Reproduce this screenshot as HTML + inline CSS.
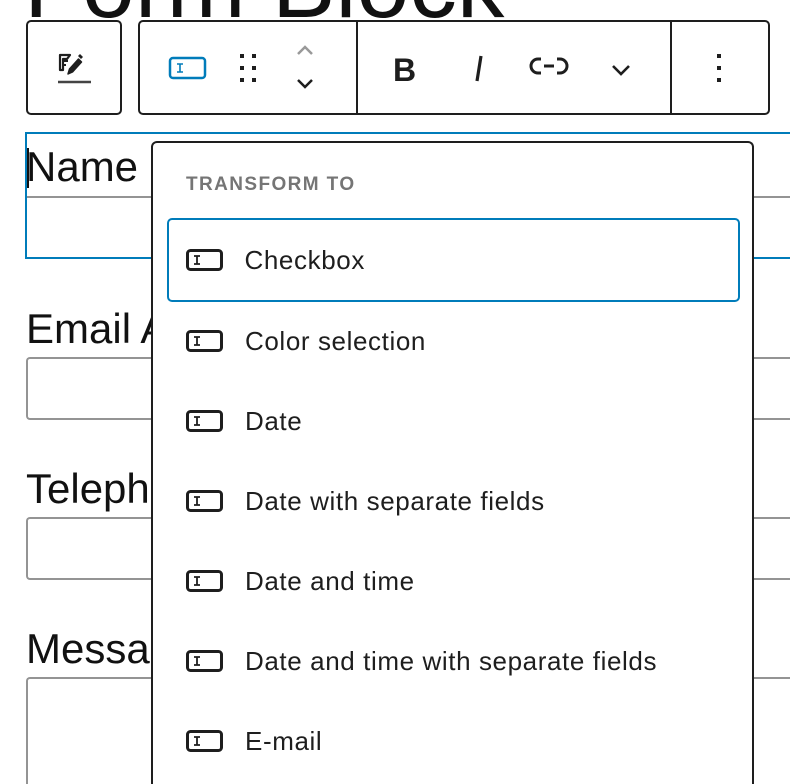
<!DOCTYPE html>
<html style="width:790px;height:784px;overflow:hidden"><head><meta charset="utf-8"><style>
*{margin:0;padding:0;box-sizing:border-box}
body{width:790px;height:784px;overflow:hidden;background:#fff;position:relative;font-family:"Liberation Sans",sans-serif;color:#1e1e1e}
.a{position:absolute}
.title{left:24px;top:-60px;font-size:95px;line-height:90px;color:#111;white-space:nowrap}
.lbl{left:26px;font-size:42px;line-height:42px;color:#111;white-space:nowrap}
.inp{left:26px;width:764px;border:2px solid #949494;border-right:none;border-radius:4px 0 0 4px}
.tb{border:2px solid #1e1e1e;border-radius:5px;background:#fff}
.pop{left:151px;top:141px;width:603px;height:643px;border:2px solid #1e1e1e;border-bottom:none;border-radius:6px 6px 0 0;background:#fff}
.hd{left:33px;top:31px;font-size:19px;font-weight:bold;color:#757575;letter-spacing:1.4px}
.item{left:14px;width:573px;height:80px;display:flex;align-items:center;font-size:26px;letter-spacing:.6px;color:#1e1e1e}
.item svg{margin-left:19px;margin-right:22px}
.sel{border:2.5px solid #007cba;border-radius:5px}
.sel svg{margin-left:16.5px}
</style></head><body>
<div class="a title">Form Block</div>

<div class="a lbl" style="top:146px">Name</div>
<div class="a" style="left:26px;top:196px;width:764px;height:2px;background:#949494"></div>
<div class="a" style="left:25px;top:132px;width:765px;height:127px;border:2.5px solid #007cba;border-right:none"></div>
<div class="a" style="left:27px;top:148px;width:2px;height:40px;background:#111"></div>

<div class="a lbl" style="top:308px">Email Address</div>
<div class="a inp" style="top:357px;height:63px"></div>
<div class="a lbl" style="top:468px">Telephone</div>
<div class="a inp" style="top:517px;height:63px"></div>
<div class="a lbl" style="top:628px">Message</div>
<div class="a inp" style="top:677px;height:107px;border-bottom:none;border-radius:4px 0 0 0"></div>

<!-- toolbar -->
<div class="a tb" style="left:26px;top:20px;width:96px;height:95px"></div>
<div class="a tb" style="left:138px;top:20px;width:632px;height:95px"></div>
<div class="a" style="left:356px;top:21px;width:2px;height:93px;background:#1e1e1e"></div>
<div class="a" style="left:670px;top:21px;width:2px;height:93px;background:#1e1e1e"></div>
<svg class="a" style="left:0;top:0" width="790" height="120" fill="none">
<path d="M60 70V55h10l-3 4h-4v11z" stroke="#1e1e1e" stroke-width="2.2" stroke-linejoin="round"/>
<path d="M63 61h5M63 65h3" stroke="#1e1e1e" stroke-width="2"/>
<path d="M68 74l1.5-5 9-10 3 3-9 10z" fill="#1e1e1e" stroke="#1e1e1e" stroke-width="1.5" stroke-linejoin="round"/>
<path d="M78 56l2-2 3 3-2 2z" fill="#1e1e1e"/>
<path d="M58 82h33" stroke="#444" stroke-width="2.6"/>
<rect x="170" y="58" width="35" height="20" rx="3" stroke="#007cba" stroke-width="2.5"/>
<path d="M177 64h6M180 64v8M177 72h6" stroke="#007cba" stroke-width="1.6"/>
<g fill="#1e1e1e"><rect x="240" y="54" width="4" height="4"/><rect x="252" y="54" width="4" height="4"/><rect x="240" y="66" width="4" height="4"/><rect x="252" y="66" width="4" height="4"/><rect x="240" y="78" width="4" height="4"/><rect x="252" y="78" width="4" height="4"/></g>
<path d="M298 54l7-7 7 7" stroke="#999" stroke-width="2.5"/>
<path d="M298 80l7 7 7-7" stroke="#1e1e1e" stroke-width="2.5"/>
<text x="393" y="81" font-size="32" font-weight="bold" font-family="Liberation Sans" fill="#1e1e1e">B</text>
<path d="M481 56l-4 25" stroke="#1e1e1e" stroke-width="3.2"/>
<path d="M541 59h-3a7 7 0 0 0 0 14h3M557 59h3a7 7 0 0 1 0 14h-3M544 66h10" stroke="#1e1e1e" stroke-width="3"/>
<path d="M613 66l8 8 8-8" stroke="#1e1e1e" stroke-width="2.6"/>
<g fill="#1e1e1e"><rect x="717" y="54" width="4" height="4"/><rect x="717" y="66" width="4" height="4"/><rect x="717" y="78" width="4" height="4"/></g>
</svg>

<div class="a pop">
<div class="a hd">TRANSFORM TO</div>
<div class="a item sel" style="top:75px;height:84px"><svg width="37" height="22" viewBox="0 0 37 22" fill="none"><rect x="1.5" y="1.5" width="34" height="19" rx="3" stroke="#1e1e1e" stroke-width="3"/><path d="M8 7h6M11 7v8M8 15h6" stroke="#1e1e1e" stroke-width="1.8"/></svg>Checkbox</div>
<div class="a item" style="top:158px"><svg width="37" height="22" viewBox="0 0 37 22" fill="none"><rect x="1.5" y="1.5" width="34" height="19" rx="3" stroke="#1e1e1e" stroke-width="3"/><path d="M8 7h6M11 7v8M8 15h6" stroke="#1e1e1e" stroke-width="1.8"/></svg>Color selection</div>
<div class="a item" style="top:238px"><svg width="37" height="22" viewBox="0 0 37 22" fill="none"><rect x="1.5" y="1.5" width="34" height="19" rx="3" stroke="#1e1e1e" stroke-width="3"/><path d="M8 7h6M11 7v8M8 15h6" stroke="#1e1e1e" stroke-width="1.8"/></svg>Date</div>
<div class="a item" style="top:318px"><svg width="37" height="22" viewBox="0 0 37 22" fill="none"><rect x="1.5" y="1.5" width="34" height="19" rx="3" stroke="#1e1e1e" stroke-width="3"/><path d="M8 7h6M11 7v8M8 15h6" stroke="#1e1e1e" stroke-width="1.8"/></svg>Date with separate fields</div>
<div class="a item" style="top:398px"><svg width="37" height="22" viewBox="0 0 37 22" fill="none"><rect x="1.5" y="1.5" width="34" height="19" rx="3" stroke="#1e1e1e" stroke-width="3"/><path d="M8 7h6M11 7v8M8 15h6" stroke="#1e1e1e" stroke-width="1.8"/></svg>Date and time</div>
<div class="a item" style="top:478px"><svg width="37" height="22" viewBox="0 0 37 22" fill="none"><rect x="1.5" y="1.5" width="34" height="19" rx="3" stroke="#1e1e1e" stroke-width="3"/><path d="M8 7h6M11 7v8M8 15h6" stroke="#1e1e1e" stroke-width="1.8"/></svg>Date and time with separate fields</div>
<div class="a item" style="top:558px"><svg width="37" height="22" viewBox="0 0 37 22" fill="none"><rect x="1.5" y="1.5" width="34" height="19" rx="3" stroke="#1e1e1e" stroke-width="3"/><path d="M8 7h6M11 7v8M8 15h6" stroke="#1e1e1e" stroke-width="1.8"/></svg>E-mail</div>
</div>
</body></html>
